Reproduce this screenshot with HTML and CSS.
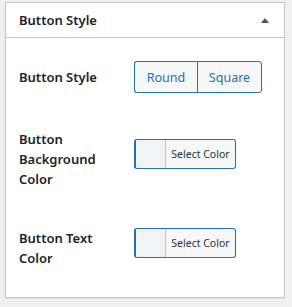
FILE: index.html
```html
<!DOCTYPE html>
<html>

<head lang="en">
    <meta charset="utf-8" />
    <title>Button Style</title>
    <link rel="stylesheet" href="styles.css">
</head>

<body>
    <div class="postbox">
        <div class="postbox-header">
            <h2>Button Style</h2>
            <span class="toggle-arrow"></span>
        </div>
        <div class="inside">
            <div class="field-row row-style">
                <label class="field-label">Button Style</label>
                <div class="button-group">
                    <button class="btn-choice">Round</button>
                    <button class="btn-choice">Square</button>
                </div>
            </div>
            <div class="field-row row-bg">
                <label class="field-label">Button Background Color</label>
                <button class="color-picker">
                    <span class="swatch"></span>
                    <span class="picker-text">Select Color</span>
                </button>
            </div>
            <div class="field-row row-text">
                <label class="field-label">Button Text Color</label>
                <button class="color-picker">
                    <span class="swatch"></span>
                    <span class="picker-text">Select Color</span>
                </button>
            </div>
        </div>
    </div>
</body>

</html>
```

FILE: styles.css
```css
body {
    margin: 0;
    padding: 2px 7px 9px 5px;
    background-color: #f0f0f1;
    font-family: "Noto Sans", "Open Sans", sans-serif;
    color: #1d2327;
}

.postbox {
    background-color: #fff;
    border: 1px solid #c3c4c7;
    box-shadow: 0 1px 1px rgba(0, 0, 0, 0.04);
}

.postbox-header {
    display: flex;
    justify-content: space-between;
    align-items: center;
    height: 34px;
    padding: 0 15px 0 13px;
    border-bottom: 1px solid #c3c4c7;
}

.postbox-header h2 {
    margin: 0;
    font-size: 13px;
    font-weight: 600;
}

.toggle-arrow {
    width: 0;
    height: 0;
    border-left: 4px solid transparent;
    border-right: 4px solid transparent;
    border-bottom: 5px solid #50575e;
}

.inside {
    padding: 23px 13px 29px 13px;
}

.field-row {
    display: flex;
    align-items: flex-start;
}

.row-style {
    margin-bottom: 36px;
}

.row-bg {
    margin-bottom: 39px;
}

.field-label {
    width: 98px;
    flex-shrink: 0;
    margin-right: 17px;
    font-size: 13px;
    font-weight: 600;
    line-height: 20px;
}

.row-style .field-label {
    padding-top: 6px;
}

.button-group {
    display: flex;
}

.btn-choice {
    height: 32px;
    padding: 0;
    width: 63px;
    font-family: inherit;
    font-size: 12.5px;
    color: #2271b1;
    background-color: #f6f7f7;
    border: 1px solid #2271b1;
    margin: 0;
}

.btn-choice:first-child {
    border-radius: 3px 0 0 3px;
    border-right: none;
}

.btn-choice:last-child {
    width: 65px;
    border-radius: 0 3px 3px 0;
}

.color-picker {
    display: flex;
    align-items: stretch;
    width: 102px;
    height: 30px;
    padding: 0;
    font-family: inherit;
    background-color: #f6f7f7;
    border: 1px solid #2271b1;
    border-left-width: 2px;
    border-radius: 3px;
    overflow: hidden;
}

.row-bg .color-picker {
    margin-top: 10px;
}

.swatch {
    width: 29px;
    flex-shrink: 0;
    background-color: #f2f3f4;
    border-right: 1px solid #c3c4c7;
}

.picker-text {
    display: flex;
    align-items: center;
    justify-content: center;
    flex: 1;
    font-size: 10.5px;
    color: #2c3338;
}
```
